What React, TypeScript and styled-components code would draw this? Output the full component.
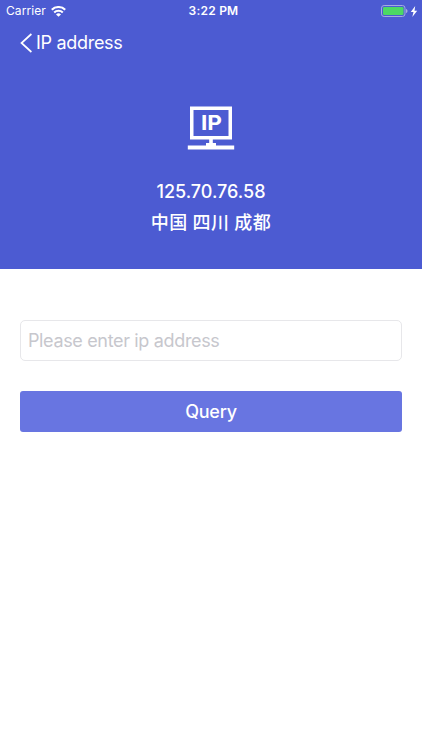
import React, { useState } from 'react';
import styled, { createGlobalStyle } from 'styled-components';

const GlobalStyle = createGlobalStyle`
  * { box-sizing: border-box; }
  body {
    margin: 0;
    background: #fff;
    font-family: Inter, 'Noto Sans CJK SC', sans-serif;
  }
`;

const Screen = styled.main`
  display: flex;
  flex-direction: column;
  height: 750px;
  overflow: hidden;
  background: #fff;
`;

const Hero = styled.header`
  display: flex;
  flex-direction: column;
  height: 269px;
  color: #fff;
  background: #4c5bd2;
`;

const StatusBar = styled.div`
  display: grid;
  grid-template-columns: 1fr auto 1fr;
  align-items: center;
  height: 22px;
  padding: 0 4px 0 6px;
  font-size: 12px;
  line-height: 22px;
`;

const Carrier = styled.div`
  display: flex;
  align-items: center;
  gap: 5px;
  letter-spacing: 0.07px;
`;

const Clock = styled.time`
  padding-left: 3px;
  font-weight: 600;
  letter-spacing: 0.22px;
`;

const Power = styled.div`
  display: flex;
  align-items: center;
  justify-content: flex-end;
  gap: 2px;
  height: 20px;
`;

const NavBar = styled.nav`
  display: flex;
  align-items: center;
  height: 42px;
  padding-left: 20px;
`;

const BackButton = styled.button`
  display: flex;
  align-items: center;
  gap: 4px;
  padding: 0;
  border: 0;
  background: none;
  color: inherit;
  font: 400 18px/24px Inter, sans-serif;
  letter-spacing: -0.3px;
`;

const Summary = styled.section`
  display: flex;
  flex-direction: column;
  align-items: center;
  padding-top: 41px;
`;

const Address = styled.div`
  margin-top: 26px;
  font-size: 18px;
  font-weight: 500;
  line-height: 30px;
`;

const Place = styled.div`
  margin-top: -1px;
  font-family: 'Noto Sans CJK SC', sans-serif;
  font-size: 18px;
  font-weight: 500;
  line-height: 30px;
  letter-spacing: 0.5px;
  word-spacing: 0.3px;
`;

const Form = styled.form`
  display: flex;
  flex-direction: column;
  gap: 30px;
  padding: 51px 20.4px 0 20.4px;
`;

const Field = styled.input`
  width: 100%;
  height: 41px;
  padding: 0 6.5px;
  border: 1px solid #e7e7ea;
  border-radius: 5px;
  outline: 0;
  background: #fff;
  color: #222;
  font: 400 18px/24px Inter, sans-serif;
  letter-spacing: -0.34px;
  &::placeholder { color: #c7c7cd; opacity: 1; }
`;

const Submit = styled.button`
  height: 41px;
  padding: 0;
  border: 0;
  border-radius: 3px;
  background: #6875e1;
  color: #fff;
  font: 500 18px/24px Inter, sans-serif;
  letter-spacing: -0.25px;
`;

const WifiIcon = () => (
  <svg width="15" height="11" viewBox="0 0 15 11" fill="none" stroke="#fff" strokeWidth="2.1">
    <path d="M.8 3.800a9.500 9.500 0 0 1 13.400 0" />
    <path d="M3.200 6.500a6.100 6.100 0 0 1 8.600 0" />
    <path d="M7.500 10.800 5 8.400a3.600 3.600 0 0 1 5 0Z" fill="#fff" stroke="none" />
  </svg>
);

const BatteryIcon = () => (
  <svg width="27" height="12" viewBox="0 0 27 12">
    <rect x="0.5" y="0.5" width="23.5" height="11" rx="2.6" fill="none" stroke="#a4acdf" />
    <rect x="2" y="2" width="20.5" height="8" rx="1.3" fill="#4cd964" />
    <path d="M25 4v4c1-.3 1.5-1 1.5-2S26 4.300 25 4Z" fill="#a4acdf" />
  </svg>
);

const BoltIcon = () => (
  <svg width="8" height="11" viewBox="0 0 8 11">
    <path d="M5.200 0 .8 6H3.500L2.300 11 7.200 4.700H4.500Z" fill="#fff" />
  </svg>
);

const ChevronIcon = () => (
  <svg width="12" height="20" viewBox="0 0 12 20" fill="none" stroke="#fff" strokeWidth="1.7">
    <path d="M11.400 1 1.500 10l9.900 9" />
  </svg>
);

const IconLabel = styled.text`
  font: 700 20px Inter, sans-serif;
  fill: #fff;
`;

const MonitorIcon = () => (
  <svg width="48" height="46" viewBox="0 0 48 46">
    <rect x="4.750" y="3.250" width="38.500" height="29.500" fill="none" stroke="#fff" strokeWidth="3.500" />
    <path d="M22.200 34h3.600v4h3.200v2.600h18.200v4H.8v-4H19V38h3.200Z" fill="#fff" />
    <IconLabel x="24.500" y="24.700" textAnchor="middle" textLength="21" lengthAdjust="spacingAndGlyphs">IP</IconLabel>
  </svg>
);

export default function App() {
  const [query, setQuery] = useState('');
  return (
    <>
      <GlobalStyle />
      <Screen>
        <Hero>
          <StatusBar>
            <Carrier>Carrier <WifiIcon /></Carrier>
            <Clock>3:22 PM</Clock>
            <Power><BatteryIcon /><BoltIcon /></Power>
          </StatusBar>
          <NavBar>
            <BackButton type="button"><ChevronIcon />IP address</BackButton>
          </NavBar>
          <Summary>
            <MonitorIcon />
            <Address>125.70.76.58</Address>
            <Place>中国 四川 成都</Place>
          </Summary>
        </Hero>
        <Form onSubmit={(event) => event.preventDefault()}>
          <Field
            value={query}
            onChange={(event) => setQuery(event.target.value)}
            placeholder="Please enter ip address"
          />
          <Submit type="submit">Query</Submit>
        </Form>
      </Screen>
    </>
  );
}
